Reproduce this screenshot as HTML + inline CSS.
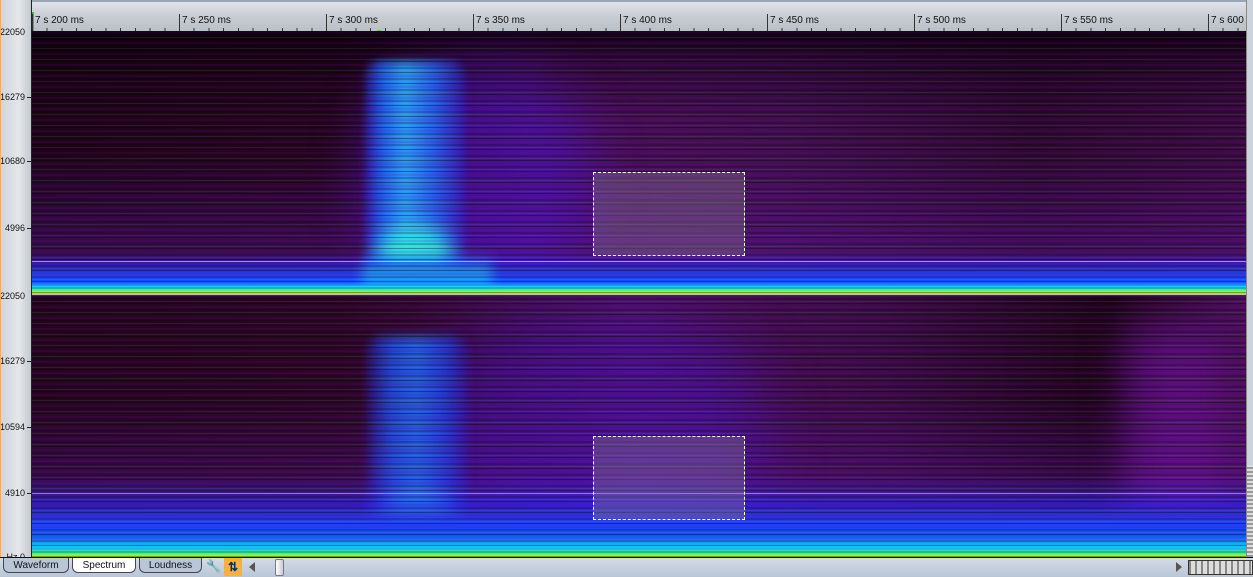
<!DOCTYPE html><html><head><style>
*{margin:0;padding:0;box-sizing:border-box}
body{width:1253px;height:577px;overflow:hidden;background:#c9d3df;font-family:"Liberation Sans",sans-serif;position:relative}
.abs{position:absolute}
#ruler{left:32px;top:0;width:1214px;height:31px;background:linear-gradient(#dfe4ea 0,#c8cdd3 14px,#b9bec4 31px);border-top:2px solid #9aa7b8;overflow:hidden}
#left{left:0;top:0;width:32px;height:557px;background:linear-gradient(90deg,#d0d5db,#e4e7ea 60%,#c4c9cf);border-left:1px solid #e8b070;border-right:1px solid #222;overflow:hidden}
.lbl{font-size:9px;color:#111;right:6px;text-align:right}
.tick{width:4px;height:1px;background:#222;right:0}
.ch{left:32px;width:1214px;overflow:hidden}
.ch div{position:absolute}
.sel{border:1px dashed #fff;background:rgba(140,130,150,.35)}
.tl{font-size:10px;color:#111;top:13px}
#bot{left:0;top:557px;width:1253px;height:20px;background:linear-gradient(#d4dce6,#b9c6d6);border-top:1px solid #111}
.tab{top:0;height:15px;font-size:10px;text-align:center;line-height:16px;color:#111;border:1px solid #445;border-top:none;border-radius:0 0 6px 6px;background:#b9c6d6}
.stripes{left:0;top:0;width:100%;height:100%;background:repeating-linear-gradient(0deg,rgba(0,0,0,.35) 0 1px,transparent 1px 2px,rgba(255,255,255,.07) 2px 3px,transparent 3px 4px,rgba(0,0,0,.2) 4px 6px,transparent 6px 7px,rgba(120,0,160,.15) 7px 9px,transparent 9px 11px)}
</style></head><body>
<div id="ruler" class="abs">
<div class="abs" style="left:0;top:10px;width:2px;height:20px;background:#2c2"></div>
<div class="abs tl" style="left:3px">7 s 200 ms</div>
<div class="abs tl" style="left:150px">7 s 250 ms</div>
<div class="abs tl" style="left:297px">7 s 300 ms</div>
<div class="abs tl" style="left:444px">7 s 350 ms</div>
<div class="abs tl" style="left:591px">7 s 400 ms</div>
<div class="abs tl" style="left:738px">7 s 450 ms</div>
<div class="abs tl" style="left:885px">7 s 500 ms</div>
<div class="abs tl" style="left:1032px">7 s 550 ms</div>
<div class="abs tl" style="left:1179px;white-space:nowrap">7 s 600 ms</div>
<div class="abs" style="left:0;top:12px;width:1214px;height:19px;background:repeating-linear-gradient(90deg,#333 0 1px,transparent 1px 147px)"></div>
<div class="abs" style="left:0;top:26px;width:1214px;height:5px;background:repeating-linear-gradient(90deg,#333 0 1px,transparent 1px 14.7px)"></div>
<div class="abs" style="left:344px;top:28px;width:6px;height:6px;border-radius:3px;background:#5c3"></div>
</div>
<div id="left" class="abs">
<div class="abs lbl" style="top:27px">22050</div>
<div class="abs lbl" style="top:92px">16279</div><div class="abs tick" style="top:97px"></div>
<div class="abs lbl" style="top:156px">10680</div><div class="abs tick" style="top:161px"></div>
<div class="abs lbl" style="top:223px">4996</div><div class="abs tick" style="top:228px"></div>
<div class="abs lbl" style="top:291px">22050</div>
<div class="abs lbl" style="top:356px">16279</div><div class="abs tick" style="top:361px"></div>
<div class="abs lbl" style="top:422px">10594</div><div class="abs tick" style="top:427px"></div>
<div class="abs lbl" style="top:488px">4910</div><div class="abs tick" style="top:493px"></div>
<div class="abs lbl" style="top:552px">Hz 0</div>
</div>

<div class="abs ch" style="top:31px;height:262px;background:
linear-gradient(180deg,rgba(10,0,10,.85) 0,rgba(10,0,10,.4) 30px,rgba(0,0,0,0) 90px),
linear-gradient(0deg,rgba(90,20,150,.6),rgba(0,0,0,0) 55%),
linear-gradient(90deg,#1e0518,#25061f 300px,#4a0f5a 500px,#40104e 750px,#2d0a30 1000px,#3a0c40 1214px)">
<div style="left:330px;top:40px;width:230px;height:220px;background:rgba(70,20,200,.5);filter:blur(25px);border-radius:40%"></div>
<div style="left:333px;top:30px;width:100px;height:232px;background:linear-gradient(90deg,rgba(40,40,255,.4),rgba(26,110,255,.85) 18%,rgba(40,170,255,.9) 40%,rgba(32,110,255,.8) 70%,rgba(40,40,240,.3));filter:blur(4px);border-radius:14px 14px 0 0"></div>
<div style="left:345px;top:195px;width:75px;height:55px;background:#30f0e0;filter:blur(10px);border-radius:50%;opacity:.85"></div>
<div style="left:0;top:222px;width:1214px;height:40px;background:linear-gradient(0deg,#e8f000 0,#40f080 3px,#10e0f0 6px,#1050ff 11px,#2040f0 18px,rgba(40,40,220,.8) 26px,rgba(60,20,200,0) 40px)"></div>
<div style="left:330px;top:222px;width:130px;height:40px;background:linear-gradient(0deg,rgba(0,0,0,0) 0,rgba(0,0,0,0) 6px,rgba(20,230,240,.7) 12px,rgba(20,150,255,.5) 28px,rgba(0,0,0,0));filter:blur(6px)"></div>
<div class="stripes"></div>
</div>
<div class="abs" style="left:32px;top:293px;width:1214px;height:3px;background:#bbb;border-bottom:1px solid #333"></div>
<div class="abs ch" style="top:296px;height:261px;background:
linear-gradient(0deg,rgba(90,20,150,.7),rgba(0,0,0,0) 60%),
linear-gradient(90deg,#25061f,#2a0724 300px,#4a105a 600px,#3a0d45 850px,#1e0518 1080px,#4a1058 1214px)">
<div style="left:400px;top:20px;width:330px;height:230px;background:rgba(70,20,200,.45);filter:blur(30px);border-radius:40%"></div>
<div style="left:1090px;top:30px;width:100px;height:220px;background:rgba(110,20,160,.6);filter:blur(20px)"></div>
<div style="left:335px;top:40px;width:100px;height:220px;background:linear-gradient(90deg,rgba(30,40,255,.3),rgba(26,92,255,.75) 25%,rgba(32,112,255,.8) 50%,rgba(26,80,255,.7) 75%,rgba(30,40,255,.25));filter:blur(5px);border-radius:14px 14px 0 0"></div>
<div style="left:350px;top:200px;width:70px;height:40px;background:#20e0f0;filter:blur(10px);border-radius:50%;opacity:.85"></div>
<div style="left:0;top:181px;width:1214px;height:80px;background:linear-gradient(0deg,#d0f000 0,#40f080 4px,#10d0f0 9px,#10a0f0 14px,#1050ff 22px,#2040f0 34px,rgba(40,40,230,.7) 50px,rgba(60,20,200,0) 80px)"></div>
<div class="stripes"></div>
</div>
<div class="abs" style="left:32px;top:261px;width:1214px;height:1px;background:rgba(255,220,255,.6)"></div>
<div class="abs" style="left:32px;top:493px;width:1214px;height:1px;background:rgba(255,220,255,.5)"></div>
<div class="abs sel" style="left:593px;top:172px;width:152px;height:84px"></div>
<div class="abs sel" style="left:593px;top:436px;width:152px;height:84px"></div>
<div class="abs" style="left:1246px;top:0;width:7px;height:557px;background:#ccd3dc;border-left:1px solid #888"></div>
<div class="abs" style="left:1247px;top:465px;width:6px;height:92px;background:repeating-linear-gradient(0deg,#999 0 2px,#ddd 2px 4px)"></div>
<div id="bot" class="abs">
<div class="abs tab" style="left:3px;width:66px">Waveform</div>
<div class="abs tab" style="left:72px;width:64px;background:#fff">Spectrum</div>
<div class="abs tab" style="left:139px;width:63px">Loudness</div>
<div class="abs" style="left:206px;top:1px;font-size:12px;color:#e0a020">&#x1F527;</div>
<div class="abs" style="left:224px;top:0;width:18px;height:18px;background:#f8b040;color:#036;font-weight:bold;font-size:12px;text-align:center;line-height:18px">⇅</div>
<div class="abs" style="left:249px;top:4px;width:0;height:0;border:5px solid transparent;border-right:6px solid #555;border-left:none"></div>
<div class="abs" style="left:275px;top:1px;width:9px;height:17px;border:1px solid #778;border-radius:2px;background:linear-gradient(90deg,#fff,#ccd)"></div>
<div class="abs" style="left:1176px;top:4px;width:0;height:0;border:5px solid transparent;border-left:6px solid #555;border-right:none"></div>
<div class="abs" style="left:1188px;top:2px;width:65px;height:15px;border:1px solid #333;background:repeating-linear-gradient(90deg,#888 0 2px,#ddd 2px 6px)"></div>
</div>
</body></html>
